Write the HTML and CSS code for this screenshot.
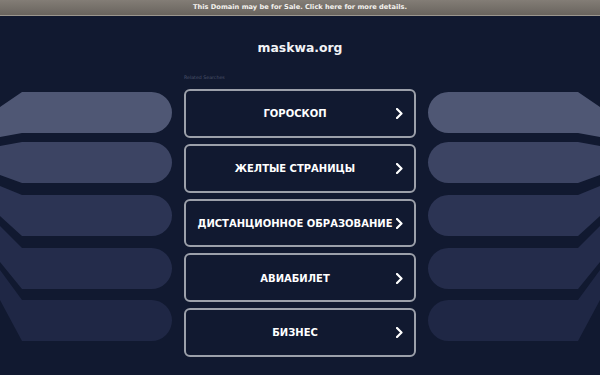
FILE: index.html
```html
<!DOCTYPE html>
<html lang="ru">
<head>
<meta charset="utf-8">
<title>maskwa.org</title>
<link rel="stylesheet" href="styles.css">
</head>
<body>
<div class="sale-bar">This Domain may be for Sale. Click here for more details.</div>
<div class="main">
  <svg class="deco" viewBox="0 16 184 359" width="184" height="359" aria-hidden="true">
    <path fill="#4f5774" d="M0,107 L22,92 L151.5,92 A20.5,20.5 0 0 1 151.5,133 L22,133 L0,137 Z"/>
    <path fill="#3c4463" d="M0,146 L22,142 L151.5,142 A20.5,20.5 0 0 1 151.5,183 L22,183 L0,175 Z"/>
    <path fill="#2c3454" d="M0,186 L22,195 L151.5,195 A20.5,20.5 0 0 1 151.5,236 L22,236 L0,216 Z"/>
    <path fill="#242c4b" d="M0,226 L22,248 L151.5,248 A20.5,20.5 0 0 1 151.5,289 L22,289 L0,262 Z"/>
    <path fill="#1f2745" d="M0,270 L22,300 L151.5,300 A20.5,20.5 0 0 1 151.5,341 L22,341 L0,300 Z"/>
  </svg>
  <div class="center">
    <h1 class="title">maskwa.org</h1>
    <div class="label">Related Searches</div>
    <div class="links">
      <a class="link" href="#"><span class="txt">ГОРОСКОП</span><svg class="chev" viewBox="0 0 7 11" width="7" height="11"><polyline points="1,1 5.5,5.5 1,10" fill="none" stroke="#fff" stroke-width="2.2" stroke-linecap="round" stroke-linejoin="round"/></svg></a>
      <a class="link" href="#"><span class="txt">ЖЕЛТЫЕ СТРАНИЦЫ</span><svg class="chev" viewBox="0 0 7 11" width="7" height="11"><polyline points="1,1 5.5,5.5 1,10" fill="none" stroke="#fff" stroke-width="2.2" stroke-linecap="round" stroke-linejoin="round"/></svg></a>
      <a class="link" href="#"><span class="txt">ДИСТАНЦИОННОЕ ОБРАЗОВАНИЕ</span><svg class="chev" viewBox="0 0 7 11" width="7" height="11"><polyline points="1,1 5.5,5.5 1,10" fill="none" stroke="#fff" stroke-width="2.2" stroke-linecap="round" stroke-linejoin="round"/></svg></a>
      <a class="link" href="#"><span class="txt">АВИАБИЛЕТ</span><svg class="chev" viewBox="0 0 7 11" width="7" height="11"><polyline points="1,1 5.5,5.5 1,10" fill="none" stroke="#fff" stroke-width="2.2" stroke-linecap="round" stroke-linejoin="round"/></svg></a>
      <a class="link" href="#"><span class="txt">БИЗНЕС</span><svg class="chev" viewBox="0 0 7 11" width="7" height="11"><polyline points="1,1 5.5,5.5 1,10" fill="none" stroke="#fff" stroke-width="2.2" stroke-linecap="round" stroke-linejoin="round"/></svg></a>
    </div>
  </div>
  <svg class="deco" viewBox="416 16 184 359" width="184" height="359" aria-hidden="true">
    <path fill="#4f5774" d="M600,107 L578,92 L448.5,92 A20.5,20.5 0 0 0 448.5,133 L578,133 L600,137 Z"/>
    <path fill="#3c4463" d="M600,146 L578,142 L448.5,142 A20.5,20.5 0 0 0 448.5,183 L578,183 L600,175 Z"/>
    <path fill="#2c3454" d="M600,186 L578,195 L448.5,195 A20.5,20.5 0 0 0 448.5,236 L578,236 L600,216 Z"/>
    <path fill="#242c4b" d="M600,226 L578,248 L448.5,248 A20.5,20.5 0 0 0 448.5,289 L578,289 L600,262 Z"/>
    <path fill="#1f2745" d="M600,270 L578,300 L448.5,300 A20.5,20.5 0 0 0 448.5,341 L578,341 L600,300 Z"/>
  </svg>
</div>
</body>
</html>
```
FILE: styles.css
```css
html, body {
  margin: 0;
  padding: 0;
  height: 100%;
  overflow: hidden;
}
body {
  background: #111930;
  font-family: "DejaVu Sans", Verdana, sans-serif;
  color: #fff;
}
.sale-bar {
  height: 15px;
  line-height: 15px;
  border-bottom: 1px solid #9b968e;
  background: linear-gradient(#837d76, #69645e);
  text-align: center;
  font-size: 6.65px;
  font-weight: bold;
  color: #f4f2ee;
}
.main {
  display: grid;
  grid-template-columns: 184px 232px 184px;
  height: 359px;
}
.deco {
  display: block;
}
.center {
  display: flex;
  flex-direction: column;
}
.title {
  margin: 22px 0 0;
  height: 20px;
  line-height: 20px;
  font-size: 12.4px;
  font-weight: bold;
  text-align: center;
  color: #f2f3f6;
}
.label {
  margin-top: 16px;
  height: 8px;
  line-height: 8px;
  font-size: 4.7px;
  color: #4d546c;
}
.links {
  margin-top: 7px;
  display: flex;
  flex-direction: column;
  gap: 6px;
}
.link {
  box-sizing: border-box;
  height: 48.75px;
  border: 2px solid #9ca0aa;
  border-radius: 6px;
  display: flex;
  align-items: center;
  padding: 1px 11px 0 8px;
  text-decoration: none;
  color: #fff;
  background: #111930;
}
.txt {
  flex: 1;
  text-align: center;
  font-size: 10px;
  font-weight: bold;
  white-space: nowrap;
}
.chev {
  display: block;
  flex: none;
}
```
